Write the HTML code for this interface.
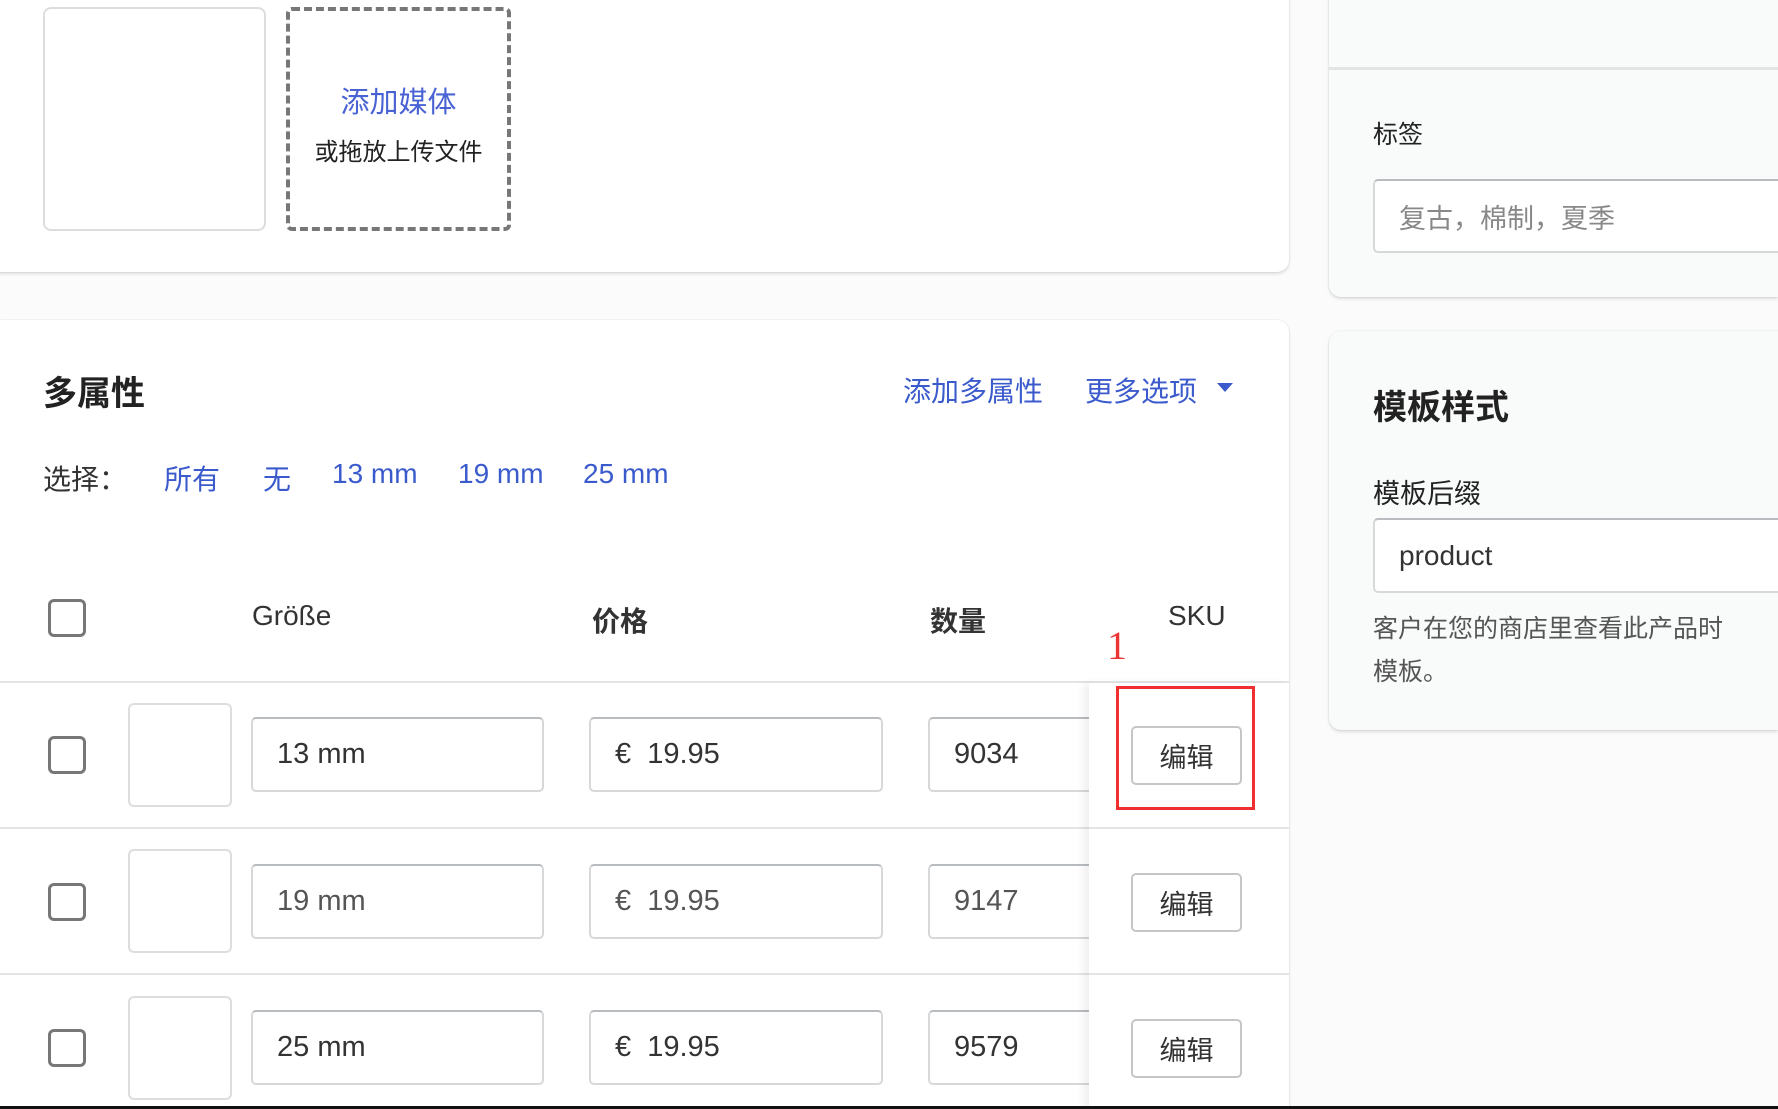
<!DOCTYPE html>
<html style="width:1778px;height:1109px;overflow:hidden"><head><meta charset="utf-8"><style>
*{box-sizing:border-box;margin:0;padding:0}
body{width:1778px;height:1109px;overflow:hidden;background:#fbfbfb;font-family:"Liberation Sans","Noto Sans CJK SC",sans-serif;color:#333;position:relative}
.a{position:absolute}
.card{position:absolute;background:#fff;border-radius:12px;box-shadow:0 2px 3px rgba(0,0,0,.12),0 0 0 1px rgba(0,0,0,.03)}
.rc{background:#f9fafa}
.blue{color:#3b5bcc}
.inp{position:absolute;background:#fff;border:2px solid #d6d8da;border-top-color:#b9bcbf;border-radius:5px;font-size:29px;color:#333;padding-left:24px;display:flex;align-items:center}
.cb{position:absolute;width:38px;height:38px;border:3px solid #777;border-radius:6px;background:#fff}
.th{position:absolute;width:104px;height:104px;border:2px solid #ddd;border-radius:6px;background:#fff}
.btn{position:absolute;width:111px;height:59px;border:2px solid #c4c6c8;border-radius:5px;background:#fff;font-size:27px;display:flex;align-items:center;justify-content:center;color:#333}
.sep{position:absolute;left:0;width:1289px;height:2px;background:#e3e4e6}
.hd{position:absolute;top:600px;font-size:28px;font-weight:bold;color:#333}
</style></head><body>
<div class="card" style="left:-10px;top:-20px;width:1299px;height:292px"></div>
<div class="a" style="left:43px;top:7px;width:223px;height:224px;border:2px solid #ddd;border-radius:8px;background:#fff"></div>
<div class="a" style="left:286px;top:7px;width:225px;height:224px;border:4px dashed #777;border-radius:6px"></div>
<div class="a blue" style="left:286px;top:79px;width:225px;text-align:center;font-size:29px;color:#4a63d4">添加媒体</div>
<div class="a" style="left:286px;top:132px;width:225px;text-align:center;font-size:24px;color:#222">或拖放上传文件</div>

<div class="card" style="left:-10px;top:320px;width:1299px;height:789px;border-bottom-left-radius:0;border-bottom-right-radius:0"></div>
<div class="a" style="left:43px;top:366px;font-size:34px;font-weight:bold;color:#222">多属性</div>
<div class="a blue" style="left:903px;top:370px;font-size:28px">添加多属性</div>
<div class="a blue" style="left:1085px;top:370px;font-size:28px">更多选项</div>
<div class="a" style="left:1217px;top:383px;width:0;height:0;border-left:8px solid transparent;border-right:8px solid transparent;border-top:9px solid #3b5bcc"></div>
<div class="a" style="left:43px;top:458px;font-size:28px;color:#333">选择：</div>
<div class="a blue" style="left:164px;top:458px;font-size:28px">所有</div>
<div class="a blue" style="left:263px;top:458px;font-size:28px">无</div>
<div class="a blue" style="left:332px;top:458px;font-size:28px">13 mm</div>
<div class="a blue" style="left:458px;top:458px;font-size:28px">19 mm</div>
<div class="a blue" style="left:583px;top:458px;font-size:28px">25 mm</div>

<div class="cb" style="left:48px;top:599px"></div>
<div class="hd" style="left:252px;font-weight:normal">Größe</div>
<div class="hd" style="left:592px">价格</div>
<div class="hd" style="left:930px">数量</div>
<div class="hd" style="left:1168px;font-weight:normal">SKU</div>
<div class="a" style="left:1107px;top:622px;font-size:40px;color:#e33;font-family:'Liberation Serif',serif">1</div>
<div class="sep" style="top:681px"></div>
<div class="sep" style="top:827px"></div>
<div class="sep" style="top:973px"></div>

<div class="cb" style="left:48px;top:736px"></div>
<div class="th" style="left:128px;top:703px"></div>
<div class="inp" style="left:251px;top:717px;width:293px;height:75px">13 mm</div>
<div class="inp" style="left:589px;top:717px;width:294px;height:75px">€&nbsp; 19.95</div>
<div class="inp" style="left:928px;top:717px;width:180px;height:75px">9034</div>

<div class="cb" style="left:48px;top:883px"></div>
<div class="th" style="left:128px;top:849px"></div>
<div class="inp" style="left:251px;top:864px;width:293px;height:75px;color:#555">19 mm</div>
<div class="inp" style="left:589px;top:864px;width:294px;height:75px;color:#555">€&nbsp; 19.95</div>
<div class="inp" style="left:928px;top:864px;width:180px;height:75px;color:#555">9147</div>

<div class="cb" style="left:48px;top:1029px"></div>
<div class="th" style="left:128px;top:996px"></div>
<div class="inp" style="left:251px;top:1010px;width:293px;height:75px">25 mm</div>
<div class="inp" style="left:589px;top:1010px;width:294px;height:75px">€&nbsp; 19.95</div>
<div class="inp" style="left:928px;top:1010px;width:180px;height:75px">9579</div>

<div class="a" style="left:1089px;top:683px;width:200px;height:426px;background:#fff;box-shadow:-6px 0 8px rgba(0,0,0,.06)"></div>
<div class="a" style="left:1089px;top:827px;width:200px;height:2px;background:#e3e4e6"></div>
<div class="a" style="left:1089px;top:973px;width:200px;height:2px;background:#e3e4e6"></div>
<div class="btn" style="left:1131px;top:726px">编辑</div>
<div class="btn" style="left:1131px;top:873px">编辑</div>
<div class="btn" style="left:1131px;top:1019px">编辑</div>
<div class="a" style="left:1116px;top:686px;width:139px;height:124px;border:3px solid #f03030"></div>

<div class="card rc" style="left:1329px;top:-20px;width:449px;height:317px;border-top-right-radius:0;border-bottom-right-radius:0"></div>
<div class="a" style="left:1329px;top:67px;width:449px;height:3px;background:#e3e4e6"></div>
<div class="a" style="left:1373px;top:115px;font-size:25px;color:#222">标签</div>
<div class="inp" style="left:1373px;top:179px;width:405px;height:74px;color:#888;font-size:27px;border-right:none;border-radius:5px 0 0 5px">复古，棉制，夏季</div>

<div class="card rc" style="left:1329px;top:331px;width:449px;height:399px;border-top-right-radius:0;border-bottom-right-radius:0"></div>
<div class="a" style="left:1373px;top:380px;font-size:34px;font-weight:bold;color:#222">模板样式</div>
<div class="a" style="left:1373px;top:472px;font-size:27px;color:#222">模板后缀</div>
<div class="inp" style="left:1373px;top:518px;width:405px;height:75px;font-size:28px;border-right:none;border-radius:5px 0 0 5px">product</div>
<div class="a" style="left:1373px;top:608px;font-size:25px;color:#555;line-height:43px;width:405px;white-space:nowrap;overflow:hidden">客户在您的商店里查看此产品时<br>模板。</div>

<div class="a" style="left:0;top:1106px;width:1778px;height:3px;background:#111"></div>
</body></html>
